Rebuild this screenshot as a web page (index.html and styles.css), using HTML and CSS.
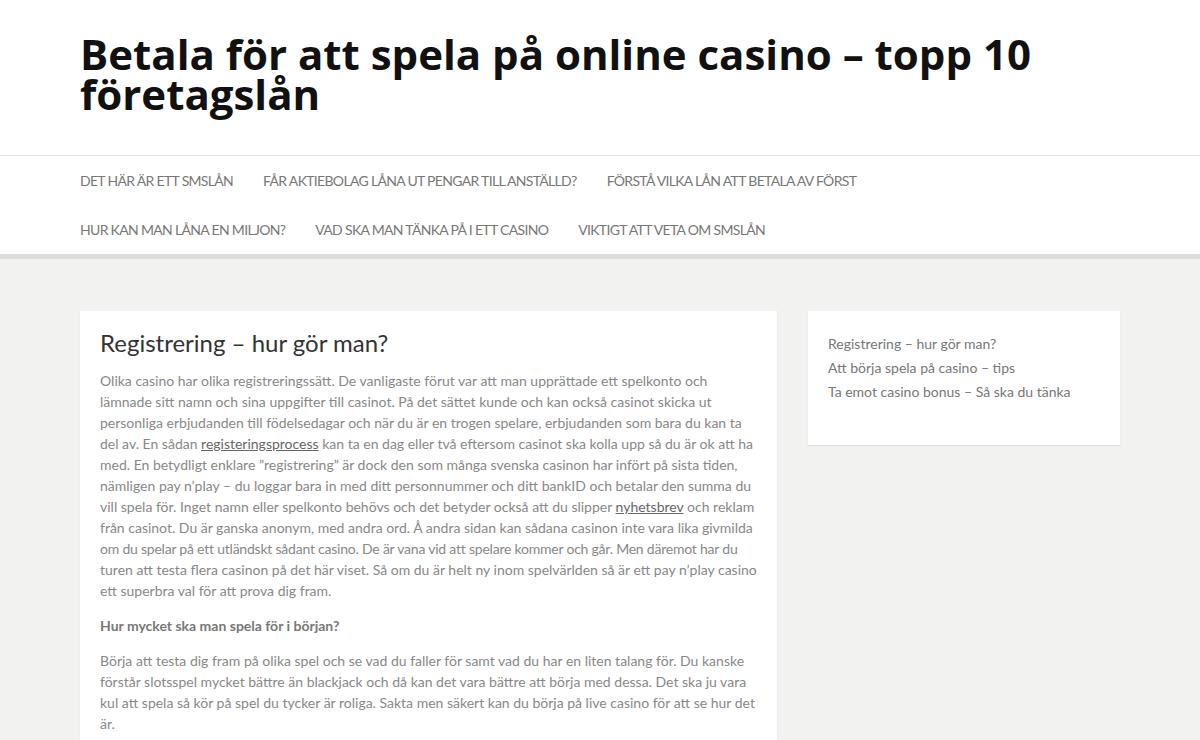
FILE: index.html
```html
<!DOCTYPE html>
<html lang="sv">
<head>
<meta charset="utf-8">
<title>Betala för att spela på online casino – topp 10 företagslån</title>
<link rel="stylesheet" href="styles.css">
</head>
<body>
<header class="site-header">
  <div class="wrap">
    <h1 class="site-title">Betala för att spela på online casino – topp 10 företagslån</h1>
  </div>
</header>
<nav class="main-nav">
  <ul class="wrap nav-list">
    <li><a href="#">Det här är ett smslån</a></li>
    <li><a href="#">Får aktiebolag låna ut pengar till anställd?</a></li>
    <li><a href="#">Förstå vilka lån att betala av först</a></li>
    <li><a href="#">Hur kan man låna en miljon?</a></li>
    <li><a href="#">Vad ska man tänka på i ett casino</a></li>
    <li><a href="#">Viktigt att veta om smslån</a></li>
  </ul>
</nav>
<div class="wrap layout">
  <main class="content">
    <article class="card post">
      <h2 class="post-title">Registrering – hur gör man?</h2>
      <p>Olika casino har olika registreringssätt. De vanligaste förut var att man upprättade ett spelkonto och lämnade sitt namn och sina uppgifter till casinot. På det sättet kunde och kan också casinot skicka ut personliga erbjudanden till födelsedagar och när du är en trogen spelare, erbjudanden som bara du kan ta del av. En sådan <a href="#">registeringsprocess</a> kan ta en dag eller två eftersom casinot ska kolla upp så du är ok att ha med. En betydligt enklare ”registrering” är dock den som många svenska casinon har infört på sista tiden, nämligen pay n’play – du loggar bara in med ditt personnummer och ditt bankID och betalar den summa du vill spela för. Inget namn eller spelkonto behövs och det betyder också att du slipper <a href="#">nyhetsbrev</a> och reklam från casinot. Du är ganska anonym, med andra ord. Å andra sidan kan sådana casinon inte vara lika givmilda <span class="tight">om du spelar på ett utländskt sådant casino. De är vana vid att spelare kommer och går. Men däremot har du</span> turen att testa flera casinon på det här viset. Så om du är helt ny inom spelvärlden så är ett pay n’play casino ett superbra val för att prova dig fram.</p>
      <p><strong>Hur mycket ska man spela för i början?</strong></p>
      <p>Börja att testa dig fram på olika spel och se vad du faller för samt vad du har en liten talang för. Du kanske förstår slotsspel mycket bättre än blackjack och då kan det vara bättre att börja med dessa. Det ska ju vara kul att spela så kör på spel du tycker är roliga. Sakta men säkert kan du börja på live casino för att se hur det är.</p>
    </article>
  </main>
  <aside class="sidebar">
    <div class="card widget">
      <ul class="widget-list">
        <li><a href="#">Registrering – hur gör man?</a></li>
        <li><a href="#">Att börja spela på casino – tips</a></li>
        <li><a href="#">Ta emot casino bonus – Så ska du tänka</a></li>
      </ul>
    </div>
  </aside>
</div>
</body>
</html>
```

FILE: styles.css
```css
* { box-sizing: border-box; }
html, body { margin: 0; padding: 0; }
body {
  background: #f2f2f0;
  font-family: Lato, "Open Sans", sans-serif;
  color: #888;
  font-size: 14px;
  line-height: 21px;
}
a { color: inherit; text-decoration: none; }
.wrap {
  width: 1040px;
  margin: 0 auto;
}
.site-header {
  background: #fff;
  border-bottom: 1px solid #e4e4e4;
}
.site-header .wrap {
  padding: 34px 0 41px;
}
.site-title {
  margin: 0;
  font-family: "Open Sans", sans-serif;
  font-weight: 700;
  font-size: 42px;
  line-height: 40px;
  color: #111;
}
.main-nav {
  background: #fff;
  border-bottom: 5px solid #dcdcd8;
}
.nav-list {
  list-style: none;
  margin: 0 auto;
  padding: 0 80px 0 0;
  display: flex;
  flex-wrap: wrap;
}
.nav-list li { margin-right: 30px; }
.nav-list a {
  display: block;
  text-transform: uppercase;
  font-size: 14px;
  letter-spacing: -0.68px;
  line-height: 49px;
  color: #777;
}
.layout {
  display: flex;
  gap: 31px;
  padding-top: 52px;
  align-items: flex-start;
}
.content { width: 697px; }
.sidebar { width: 312px; }
.card {
  background: #fff;
  box-shadow: 0 1px 1px rgba(0,0,0,0.08);
}
.post { padding: 16px 20px 20px; }
.post-title {
  margin: 0 0 11px;
  font-size: 24px;
  line-height: 32px;
  font-weight: 400;
  color: #333;
}
.post p { margin: 0 0 14px; }
.post p a { text-decoration: underline; color: #666; }
.post strong { color: #777; font-weight: 700; }
.tight { letter-spacing: -0.22px; }
.widget { padding: 21px 20px 41px; }
.widget-list {
  list-style: none;
  margin: 0;
  padding: 0;
}
.widget-list li { line-height: 24px; }
.widget-list a { color: #777; }
```
